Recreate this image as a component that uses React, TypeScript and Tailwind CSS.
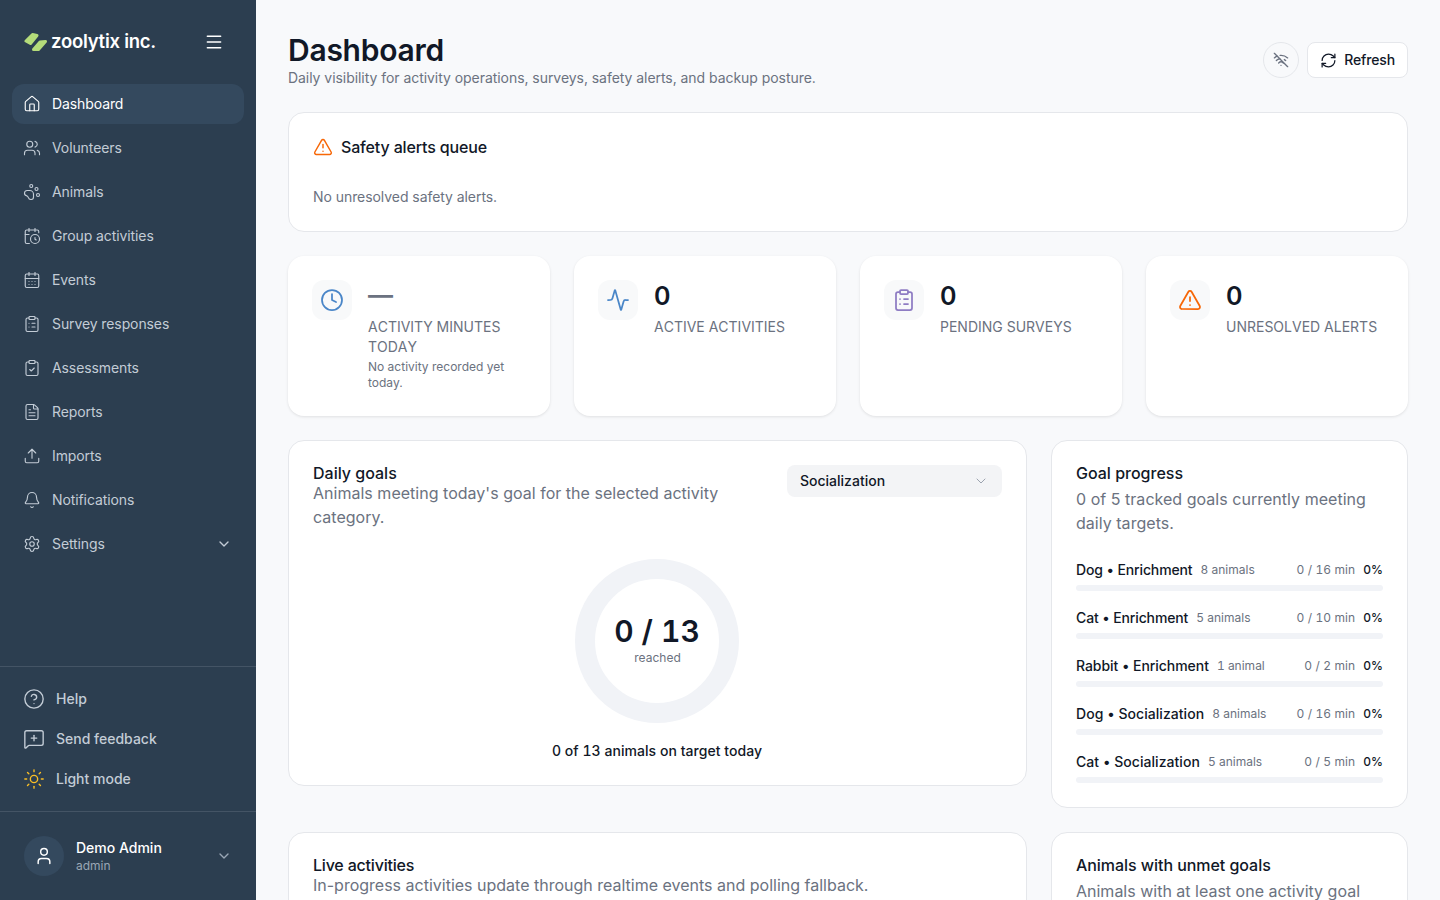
import React from "react";
import {
  House, Users, PawPrint, CalendarClock, CalendarDays, ClipboardList, ClipboardCheck, FileText,
  Upload, Bell, Settings, ChevronDown, CircleHelp, MessageSquarePlus, Sun, User, WifiOff,
  RefreshCw, Clock, Activity, TriangleAlert, Menu,
} from "lucide-react";

const nav = [
  ["Dashboard", House], ["Volunteers", Users], ["Animals", PawPrint], ["Group activities", CalendarClock],
  ["Events", CalendarDays], ["Survey responses", ClipboardList], ["Assessments", ClipboardCheck],
  ["Reports", FileText], ["Imports", Upload], ["Notifications", Bell], ["Settings", Settings],
] as const;

const goals = [
  ["Dog • Enrichment", "8 animals", "0 / 16 min", "tracking-[-0.125px]"],
  ["Cat • Enrichment", "5 animals", "0 / 10 min", "tracking-[-0.125px]"],
  ["Rabbit • Enrichment", "1 animal", "0 / 2 min", "tracking-[-0.05px]"],
  ["Dog • Socialization", "8 animals", "0 / 16 min", "tracking-[0.05px]"],
  ["Cat • Socialization", "5 animals", "0 / 5 min", "tracking-[0.05px]"],
];

function Stat({ icon: Icon, color, value, label, note, dash }: any) {
  return (
    <div className="h-40 rounded-2xl bg-white p-6 shadow-[0_1px_3px_rgba(0,0,0,0.1)] flex gap-4">
      <div className="w-10 h-10 shrink-0 rounded-xl bg-[#f8f9fa] flex items-center justify-center">
        <Icon size={24} strokeWidth={1.75} className={color} />
      </div>
      <div className="min-w-0">
        <div className={`text-[25px] leading-8 font-semibold h-8 flex items-center ${dash ? "text-[#6b7280] -translate-y-px" : "text-[#111827]"}`}>{value}</div>
        <div className="text-sm leading-5 text-[#6b7280] uppercase mt-[5px] [font-kerning:none]">{label}</div>
        {note && <div className="text-xs leading-4 text-[#6b7280] mt-0.5">{note}</div>}
      </div>
    </div>
  );
}

export default function App() {
  return (
    <div className="h-screen flex overflow-hidden bg-[#f8f9fb] font-['Inter',sans-serif] text-[#111827]">
      <aside className="w-64 shrink-0 bg-[#2c3e50] flex flex-col text-[#c3ccd6]">
        <div className="h-[84px] pl-6 pr-8 flex items-center justify-between">
          <div className="flex items-center gap-1">
            <svg width="23" height="20" viewBox="24 32 23 20" className="shrink-0">
              <path d="M26 41 32.5 34.5 37 35.5 30.5 43.5z" fill="#b5dc7a" stroke="#b5dc7a" strokeWidth="3" strokeLinejoin="round" />
              <path d="M33.5 49.5 40 42 45.5 41.5 38.5 49.5z" fill="#b5dc7a" stroke="#b5dc7a" strokeWidth="3" strokeLinejoin="round" />
            </svg>
            <span className="text-[18.5px] font-semibold text-white tracking-[-0.25px] -mt-px">zoolytix inc.</span>
          </div>
          <Menu size={20} className="text-white" strokeWidth={1.75} />
        </div>
        <nav className="px-3 flex flex-col gap-1">
          {nav.map(([name, Icon], i) => (
            <div key={name} className={`h-10 rounded-xl px-3 flex items-center gap-2.5 text-sm tracking-[-0.1px] ${i === 0 ? "bg-[#34495e] text-white" : ""}`}>
              <Icon size={18} strokeWidth={1.5} className="-ml-px mr-px" />
              <span className="flex-1">{name}</span>
              {name === "Settings" && <ChevronDown size={16} />}
            </div>
          ))}
        </nav>
        <div className="mt-auto border-t border-[#445465] px-3 py-3">
          {[["Help", CircleHelp, ""], ["Send feedback", MessageSquarePlus, ""], ["Light mode", Sun, "text-[#fbbf24]"]].map(([n, Icon, c]: any) => (
            <div key={n} className="h-10 px-3 flex items-center gap-[11px] text-sm font-medium">
              <Icon size={22} strokeWidth={1.5} className={`-ml-px ${c}`} />
              <span>{n}</span>
            </div>
          ))}
        </div>
        <div className="border-t border-[#445465] h-[89px] pl-6 pr-6 flex items-center gap-3">
          <div className="w-10 h-10 rounded-full bg-[#34495e] flex items-center justify-center text-white">
            <User size={20} strokeWidth={1.75} />
          </div>
          <div className="flex-1">
            <div className="text-sm leading-5 font-medium text-white">Demo Admin</div>
            <div className="text-xs leading-4 text-[#9aa7b5]">admin</div>
          </div>
          <ChevronDown size={16} className="text-[#9aa7b5]" />
        </div>
      </aside>

      <main className="flex-1 min-w-0 overflow-hidden px-8 pt-8">
        <header className="flex items-start justify-between">
          <div>
            <h1 className="text-[30px] leading-9 font-semibold tracking-[-0.25px]">Dashboard</h1>
            <p className="text-sm leading-5 text-[#6b7280] tracking-[-0.05px]">Daily visibility for activity operations, surveys, safety alerts, and backup posture.</p>
          </div>
          <div className="flex items-center gap-2 mt-2.5">
            <div className="w-9 h-9 rounded-full border border-[#e5e7eb] flex items-center justify-center text-[#6b7280]">
              <WifiOff size={16} />
            </div>
            <div className="h-9 px-3 rounded-lg border border-[#e5e7eb] bg-white flex items-center gap-1.5 text-sm font-medium tracking-[-0.15px]">
              <RefreshCw size={17} strokeWidth={1.75} className="mr-px" />
              <span>Refresh</span>
            </div>
          </div>
        </header>

        <section className="mt-6 h-[120px] rounded-2xl border border-[#e5e7eb] bg-white px-6 pt-6">
          <div className="flex items-center gap-2">
            <TriangleAlert size={20} className="text-[#f76707]" strokeWidth={1.75} />
            <h2 className="text-base leading-5 font-medium tracking-[-0.15px]">Safety alerts queue</h2>
          </div>
          <p className="mt-[30px] text-sm leading-5 text-[#6b7280] tracking-[-0.06px]">No unresolved safety alerts.</p>
        </section>

        <section className="mt-6 grid grid-cols-4 gap-6">
          <Stat icon={Clock} color="text-[#4a86c8]" value="—" dash label="Activity minutes today" note="No activity recorded yet today." />
          <Stat icon={Activity} color="text-[#4a86c8]" value="0" label="Active activities" />
          <Stat icon={ClipboardList} color="text-[#8e7cc3]" value="0" label="Pending surveys" />
          <Stat icon={TriangleAlert} color="text-[#f76707]" value="0" label="Unresolved alerts" />
        </section>

        <section className="mt-6 grid grid-cols-[minmax(0,1fr)_357px] gap-6 items-start">
          <div className="h-[346px] rounded-2xl border border-[#e5e7eb] bg-white p-6">
            <div className="flex items-start justify-between gap-6">
              <div className="w-[450px]">
                <h3 className="text-base leading-4 font-medium">Daily goals</h3>
                <p className="text-base leading-6 text-[#6b7280] tracking-[0.02px]">Animals meeting today's goal for the selected activity category.</p>
              </div>
              <div className="w-[215px] h-8 rounded-lg bg-[#f3f4f6] pl-[13px] pr-[13px] flex items-center justify-between text-sm font-medium">
                <span>Socialization</span>
                <ChevronDown size={16} strokeWidth={1.5} className="text-[#9ca3af]" />
              </div>
            </div>
            <div className="mt-[30px] pr-px flex flex-col items-center">
              <div className="w-[164px] h-[164px] pb-1 rounded-full border-[20px] border-[#f1f3f7] flex flex-col items-center justify-center">
                <div className="text-[30px] leading-[37px] font-semibold tabular-nums">0 / 13</div>
                <div className="text-xs leading-4 text-[#6b7280] ml-px">reached</div>
              </div>
              <div className="mt-[18px] text-sm leading-5 font-medium tabular-nums tracking-[0.04px]">0 of 13 animals on target today</div>
            </div>
          </div>

          <div className="h-[368px] rounded-2xl border border-[#e5e7eb] bg-white p-6">
            <h3 className="text-base leading-4 font-medium">Goal progress</h3>
            <p className="mt-1.5 text-base leading-6 text-[#6b7280] tracking-[0.03px]">0 of 5 tracked goals currently meeting daily targets.</p>
            <div className="mt-[25px] flex flex-col gap-[17px]">
              {goals.map(([n, a, m, t]) => (
                <div key={n + a}>
                  <div className="h-5 flex items-center">
                    <span className={`text-sm font-medium ${t}`}>{n}</span>
                    <span className="ml-2 text-xs text-[#6b7280] tabular-nums">{a}</span>
                    <span className="ml-auto text-xs text-[#6b7280] tabular-nums tracking-[0.1px]">{m}</span>
                    <span className="ml-2 text-xs font-medium tabular-nums">0%</span>
                  </div>
                  <div className="mt-[5px] h-1.5 rounded-full bg-[#f1f3f7]" />
                </div>
              ))}
            </div>
          </div>
        </section>

        <section className="mt-6 grid grid-cols-[minmax(0,1fr)_357px] gap-6 items-start">
          <div className="h-[200px] rounded-2xl border border-[#e5e7eb] bg-white p-6">
            <h3 className="text-base leading-4 font-medium tracking-[-0.2px]">Live activities</h3>
            <p className="text-base leading-6 text-[#6b7280]">In-progress activities update through realtime events and polling fallback.</p>
          </div>
          <div className="h-[200px] rounded-2xl border border-[#e5e7eb] bg-white p-6">
            <h3 className="text-base leading-4 font-medium tracking-[-0.05px]">Animals with unmet goals</h3>
            <p className="mt-1.5 text-base leading-6 text-[#6b7280]">Animals with at least one activity goal</p>
          </div>
        </section>
      </main>
    </div>
  );
}
